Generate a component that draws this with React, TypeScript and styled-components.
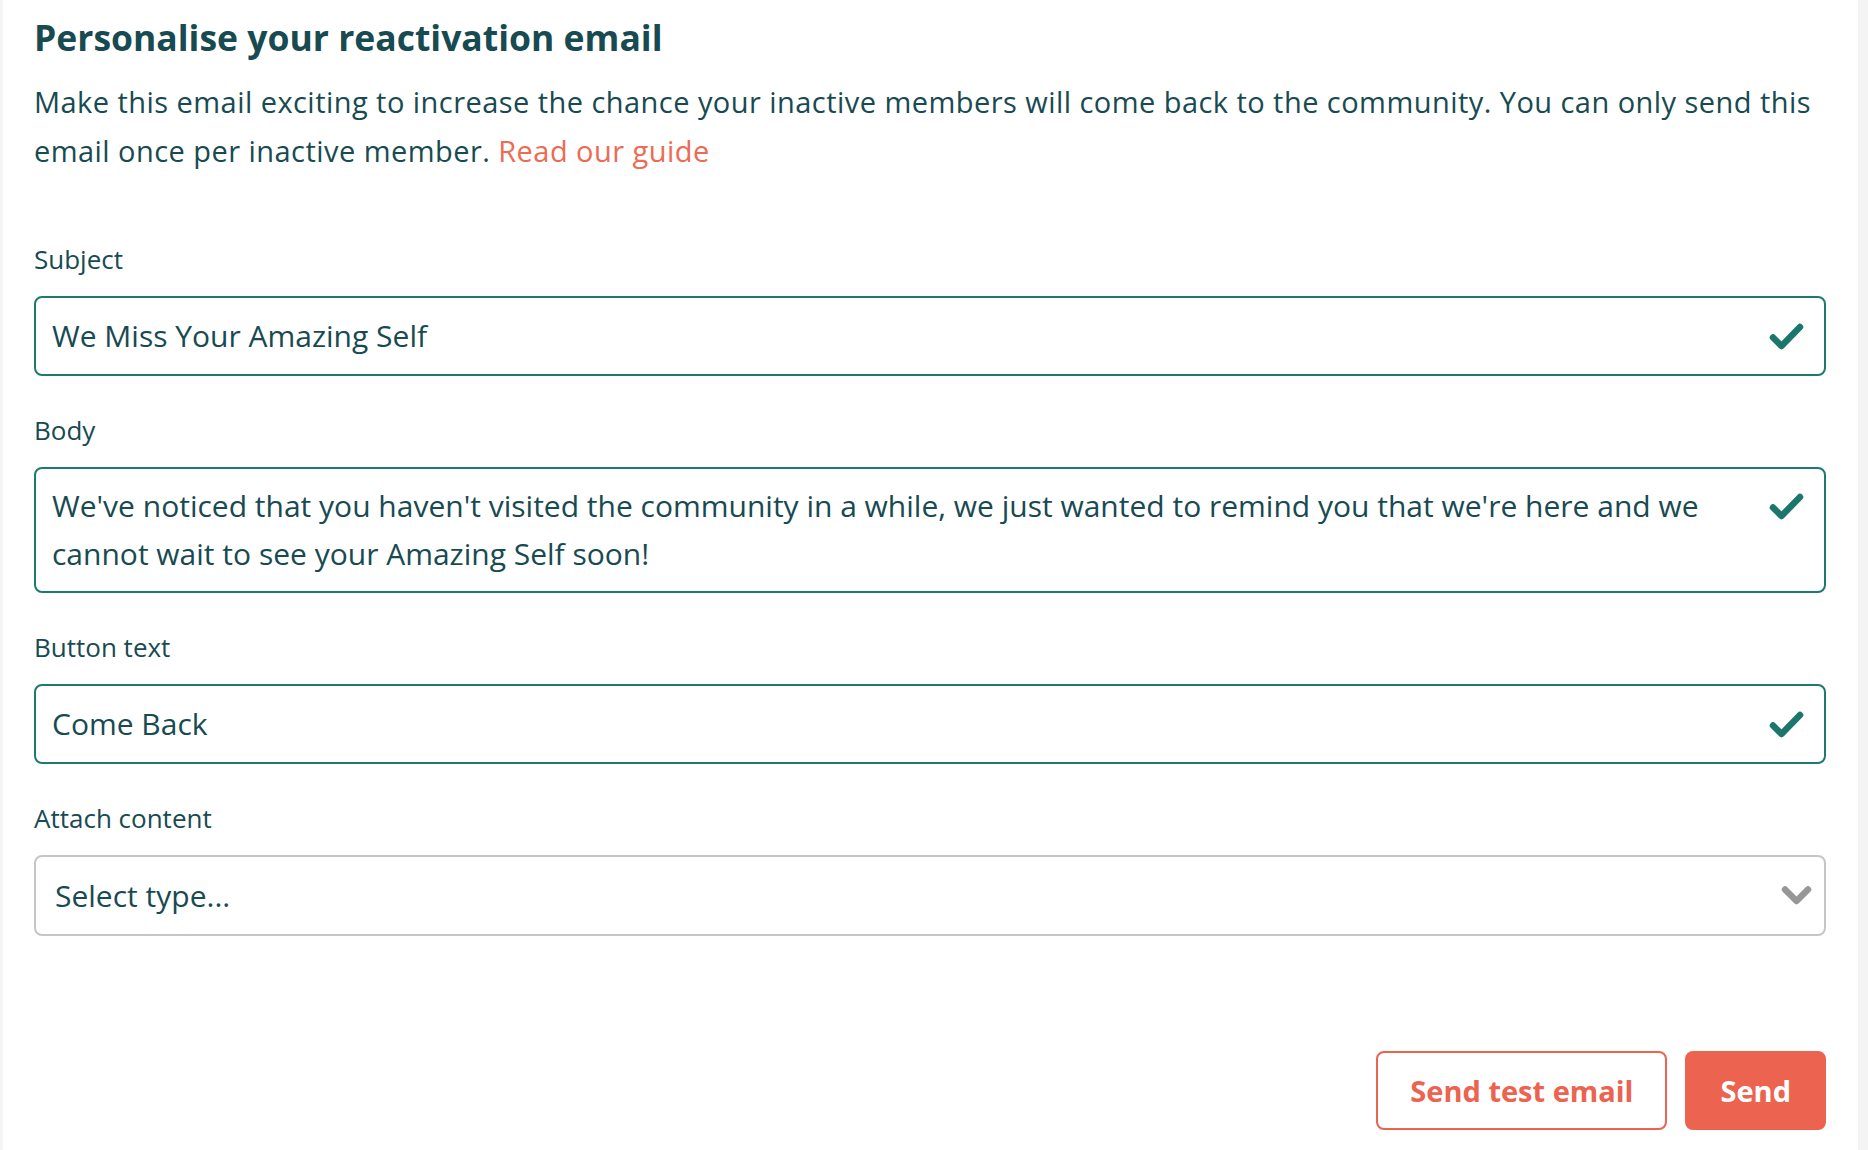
import React from "react";
import styled, { createGlobalStyle } from "styled-components";

const Global = createGlobalStyle`
  html, body { margin: 0; padding: 0; background: #f4f4f4; }
  body { font-family: "Open Sans", "Lato", sans-serif; color: #184a52; }
  * { box-sizing: border-box; }
`;

const Page = styled.div`
  display: flex;
  min-height: 1150px;
  padding: 0 10px 0 3px;
`;

const Panel = styled.main`
  flex: 1;
  background: #ffffff;
  padding: 14px 32px 20px 31px;
  display: flex;
  flex-direction: column;
`;

const Title = styled.h1`
  margin: 0;
  font-size: 35.5px;
  line-height: 46px;
  font-weight: 700;
  color: #174a51;
`;

const Intro = styled.p`
  margin: 17px 0 0;
  font-size: 29px;
  line-height: 49px;
  letter-spacing: 0.45px;
  color: #184a52;
`;

const GuideLink = styled.a`
  color: #ee6a52;
  text-decoration: none;
`;

const Form = styled.form`
  display: flex;
  flex-direction: column;
  margin-top: 69px;
`;

const Field = styled.div`
  display: flex;
  flex-direction: column;
  margin-bottom: 39px;
`;

const Label = styled.label`
  font-size: 26px;
  line-height: 30px;
  margin-bottom: 22px;
  color: #184a52;
`;

const Box = styled.div<{ $tall?: boolean; $neutral?: boolean }>`
  display: flex;
  align-items: ${(p) => (p.$tall ? "flex-start" : "center")};
  border: 2px solid ${(p) => (p.$neutral ? "#c6c6c6" : "#1d7a70")};
  border-radius: 8px;
  min-height: ${(p) => (p.$neutral ? "81px" : "80px")};
  padding: ${(p) =>
    p.$tall ? "13px 18px 13px 16px" : p.$neutral ? "0 12px 0 19px" : "0 18px 0 16px"};
  background: #fff;
`;

const Value = styled.div`
  flex: 1;
  font-size: 30px;
  line-height: 48px;
  color: #184a52;
  padding-right: 40px;
`;

const IconSlot = styled.span<{ $tall?: boolean; $end?: boolean }>`
  display: flex;
  align-items: center;
  justify-content: ${(p) => (p.$end ? "flex-end" : "center")};
  width: 40px;
  height: ${(p) => (p.$tall ? "48px" : "auto")};
  flex: none;
`;

const Actions = styled.div`
  display: flex;
  justify-content: flex-end;
  gap: 18px;
  margin-top: 76px;
`;

const Button = styled.button<{ $primary?: boolean }>`
  height: 79px;
  border-radius: 8px;
  border: 2px solid #ec634f;
  background: ${(p) => (p.$primary ? "#ec634f" : "#ffffff")};
  color: ${(p) => (p.$primary ? "#ffffff" : "#ec634f")};
  font-family: "Open Sans", "Lato", sans-serif;
  font-size: 29px;
  font-weight: 700;
  padding: ${(p) => (p.$primary ? "0 33px" : "0 32px")};
  cursor: pointer;
`;

const Check = () => (
  <svg width="35" height="28" viewBox="0 0 35 28" fill="none">
    <path
      d="M4 15.5 L12.5 24 L31 5"
      stroke="#1b766c"
      strokeWidth="6.5"
      strokeLinecap="round"
      strokeLinejoin="round"
    />
  </svg>
);

const Chevron = () => (
  <svg width="31" height="22" viewBox="0 0 31 22" fill="none">
    <path
      d="M4 4.5 L15.5 16 L27 4.5"
      stroke="#979797"
      strokeWidth="6.5"
      strokeLinecap="round"
      strokeLinejoin="round"
    />
  </svg>
);

export default function App() {
  return (
    <>
      <Global />
      <Page>
        <Panel>
          <Title>Personalise your reactivation email</Title>
          <Intro>
            Make this email exciting to increase the chance your inactive members will come back to the
            community. You can only send this email once per inactive member.{" "}
            <GuideLink href="#">Read our guide</GuideLink>
          </Intro>
          <Form onSubmit={(e) => e.preventDefault()}>
            <Field>
              <Label>Subject</Label>
              <Box>
                <Value>We Miss Your Amazing Self</Value>
                <IconSlot>
                  <Check />
                </IconSlot>
              </Box>
            </Field>
            <Field>
              <Label>Body</Label>
              <Box $tall>
                <Value>
                  We've noticed that you haven't visited the community in a while, we just wanted to remind you
                  that we're here and we cannot wait to see your Amazing Self soon!
                </Value>
                <IconSlot $tall>
                  <Check />
                </IconSlot>
              </Box>
            </Field>
            <Field>
              <Label>Button text</Label>
              <Box>
                <Value>Come Back</Value>
                <IconSlot>
                  <Check />
                </IconSlot>
              </Box>
            </Field>
            <Field>
              <Label>Attach content</Label>
              <Box $neutral>
                <Value>Select type...</Value>
                <IconSlot $end>
                  <Chevron />
                </IconSlot>
              </Box>
            </Field>
          </Form>
          <Actions>
            <Button type="button">Send test email</Button>
            <Button type="button" $primary>
              Send
            </Button>
          </Actions>
        </Panel>
      </Page>
    </>
  );
}
